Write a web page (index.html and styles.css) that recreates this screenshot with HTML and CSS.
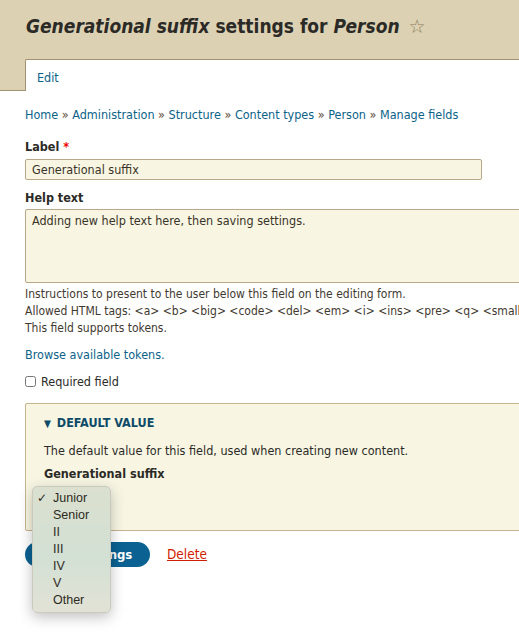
FILE: index.html
```html
<!DOCTYPE html>
<html lang="en">
<head>
    <meta charset="UTF-8">
    <meta name="viewport" content="width=device-width, initial-scale=1.0">
    <title>Generational suffix settings for Person</title>
    <link rel="stylesheet" href="styles.css">
</head>
<body>
    <header class="page-head">
        <h1 class="page-title"><em>Generational suffix</em> settings for <em>Person</em> <span class="shortcut">&#9734;</span></h1>
        <ul class="tabs">
            <li class="tab"><a href="#">Edit</a></li>
        </ul>
    </header>

    <main class="content">
        <nav class="breadcrumb">
            <a href="#">Home</a> &raquo; <a href="#">Administration</a> &raquo; <a href="#">Structure</a> &raquo; <a href="#">Content types</a> &raquo; <a href="#">Person</a> &raquo; <a href="#">Manage fields</a>
        </nav>

        <form class="field-form">
            <div class="form-item">
                <label class="form-label" for="label">Label <span class="required">*</span></label>
                <input class="form-text" id="label" type="text" value="Generational suffix">
            </div>

            <div class="form-item">
                <label class="form-label label-help" for="help">Help text</label>
                <textarea class="form-textarea" id="help">Adding new help text here, then saving settings.</textarea>
                <div class="description">
                    Instructions to present to the user below this field on the editing form.<br>
                    Allowed HTML tags: &lt;a&gt; &lt;b&gt; &lt;big&gt; &lt;code&gt; &lt;del&gt; &lt;em&gt; &lt;i&gt; &lt;ins&gt; &lt;pre&gt; &lt;q&gt; &lt;small&gt; &lt;span&gt; &lt;strong&gt;<br>
                    This field supports tokens.
                </div>
            </div>

            <p class="token-link"><a href="#">Browse available tokens.</a></p>

            <div class="checkbox-item">
                <input type="checkbox" id="required" class="form-checkbox">
                <label for="required">Required field</label>
            </div>

            <fieldset class="details">
                <div class="summary"><span class="arrow">&#9660;</span> Default value</div>
                <p class="details-text">The default value for this field, used when creating new content.</p>
                <div class="form-label">Generational suffix</div>
                <div class="select-wrap">
                    <ul class="select-popup">
                        <li class="checked">Junior</li>
                        <li>Senior</li>
                        <li>II</li>
                        <li>III</li>
                        <li>IV</li>
                        <li>V</li>
                        <li>Other</li>
                    </ul>
                </div>
            </fieldset>

            <div class="actions">
                <button type="button" class="button-primary">Save settings</button>
                <a href="#" class="delete-link">Delete</a>
            </div>
        </form>
    </main>
</body>
</html>
```

FILE: styles.css
```css
html {
    overflow: hidden;
}

body {
    margin: 0;
    min-height: 100vh;
    font-family: 'DejaVu Sans Condensed', 'DejaVu Sans', sans-serif;
    font-size: 12.5px;
    line-height: 15px;
    color: #2b2a26;
    background: #fff;
}

a {
    color: #0b6389;
    text-decoration: none;
}

.page-head {
    background: #dcd1b3;
    border-bottom: 1px solid #a39271;
}

.page-title {
    margin: 0;
    padding: 14px 0 0 26px;
    height: 45px;
    box-sizing: border-box;
    font-size: 19px;
    line-height: 24px;
    font-weight: bold;
    color: #2b2a26;
    white-space: nowrap;
}

.page-title em {
    font-style: oblique;
}

.shortcut {
    font-family: 'DejaVu Sans', sans-serif;
    font-weight: normal;
    font-style: normal;
    color: #8c7d5b;
    font-size: 19px;
    margin-left: 3px;
}

.tabs {
    list-style: none;
    margin: 14px 0 -1px 25px;
    padding: 0;
}

.tab {
    background: #fff;
    border-top: 1px solid #a39271;
    border-left: 1px solid #a39271;
    border-top-left-radius: 2px;
    height: 32px;
    box-sizing: border-box;
    padding: 10px 0 0 11px;
}

.content {
    padding: 16px 0 0 25px;
}

.breadcrumb {
    color: #5c4d35;
    white-space: nowrap;
    margin-bottom: 17px;
}

.form-item {
    margin-bottom: 10px;
}

.form-label {
    display: block;
    font-weight: bold;
    margin-bottom: 5px;
}

.label-help {
    margin-bottom: 4px;
}

.required {
    color: #e00;
}

.form-text,
.form-textarea {
    display: block;
    box-sizing: border-box;
    background: #f8f6e3;
    border: 1px solid #b8a888;
    border-radius: 2px;
    font-family: inherit;
    font-size: 12.5px;
    color: #3a3328;
    padding: 2px 6px;
    margin: 0;
}

.form-text {
    width: 457px;
    height: 21px;
}

.form-textarea {
    width: 640px;
    height: 74px;
    resize: none;
    padding-top: 3px;
    line-height: 15px;
}

.description {
    font-size: 12px;
    line-height: 17px;
    color: #3f3a30;
    white-space: nowrap;
    margin-top: 3px;
}

.token-link {
    margin: 0 0 12px;
}

.checkbox-item {
    display: flex;
    align-items: center;
    margin-bottom: 14px;
}

.form-checkbox {
    margin: 0 5px 0 0;
    width: 11px;
    height: 11px;
}

.details {
    margin: 0;
    padding: 11px 18px 0;
    width: 600px;
    background: #f8f6e3;
    border: 1px solid #c6b38f;
    border-radius: 2px;
}

.summary {
    font-weight: bold;
    text-transform: uppercase;
    color: #0d4b68;
    margin-bottom: 12px;
}

.arrow {
    font-size: 10px;
    margin-right: 2px;
}

.details-text {
    margin: 0 0 8px;
}

.details .form-label {
    margin-bottom: 0;
}

.select-wrap {
    position: relative;
    height: 49px;
}

.select-popup {
    position: absolute;
    left: -12px;
    top: 5px;
    width: 79px;
    box-sizing: border-box;
    margin: 0;
    padding: 3px 0;
    list-style: none;
    background: linear-gradient(180deg, #dbe0cf 0%, #d3e0d4 55%, #e2e2d6 100%);
    border: 1px solid #c9c9bd;
    border-radius: 5px;
    box-shadow: 0 4px 14px rgba(0, 0, 0, 0.25);
    z-index: 10;
    font-family: 'Liberation Sans', sans-serif;
    font-size: 12.5px;
    color: #2d2a22;
}

.select-popup li {
    height: 17px;
    line-height: 17px;
    padding-left: 20px;
    position: relative;
}

.select-popup .checked::before {
    content: "\2713";
    position: absolute;
    left: 4px;
    font-family: 'DejaVu Sans', sans-serif;
    font-size: 12px;
}

.actions {
    display: flex;
    align-items: center;
    gap: 17px;
    margin-top: 11px;
}

.button-primary {
    background: #0b6292;
    color: #fff;
    border: none;
    border-radius: 13px;
    height: 25px;
    width: 125px;
    font-family: inherit;
    font-size: 13px;
    font-weight: bold;
    cursor: pointer;
}

.delete-link {
    color: #d21e00;
    text-decoration: underline;
    font-size: 13.5px;
}
```
